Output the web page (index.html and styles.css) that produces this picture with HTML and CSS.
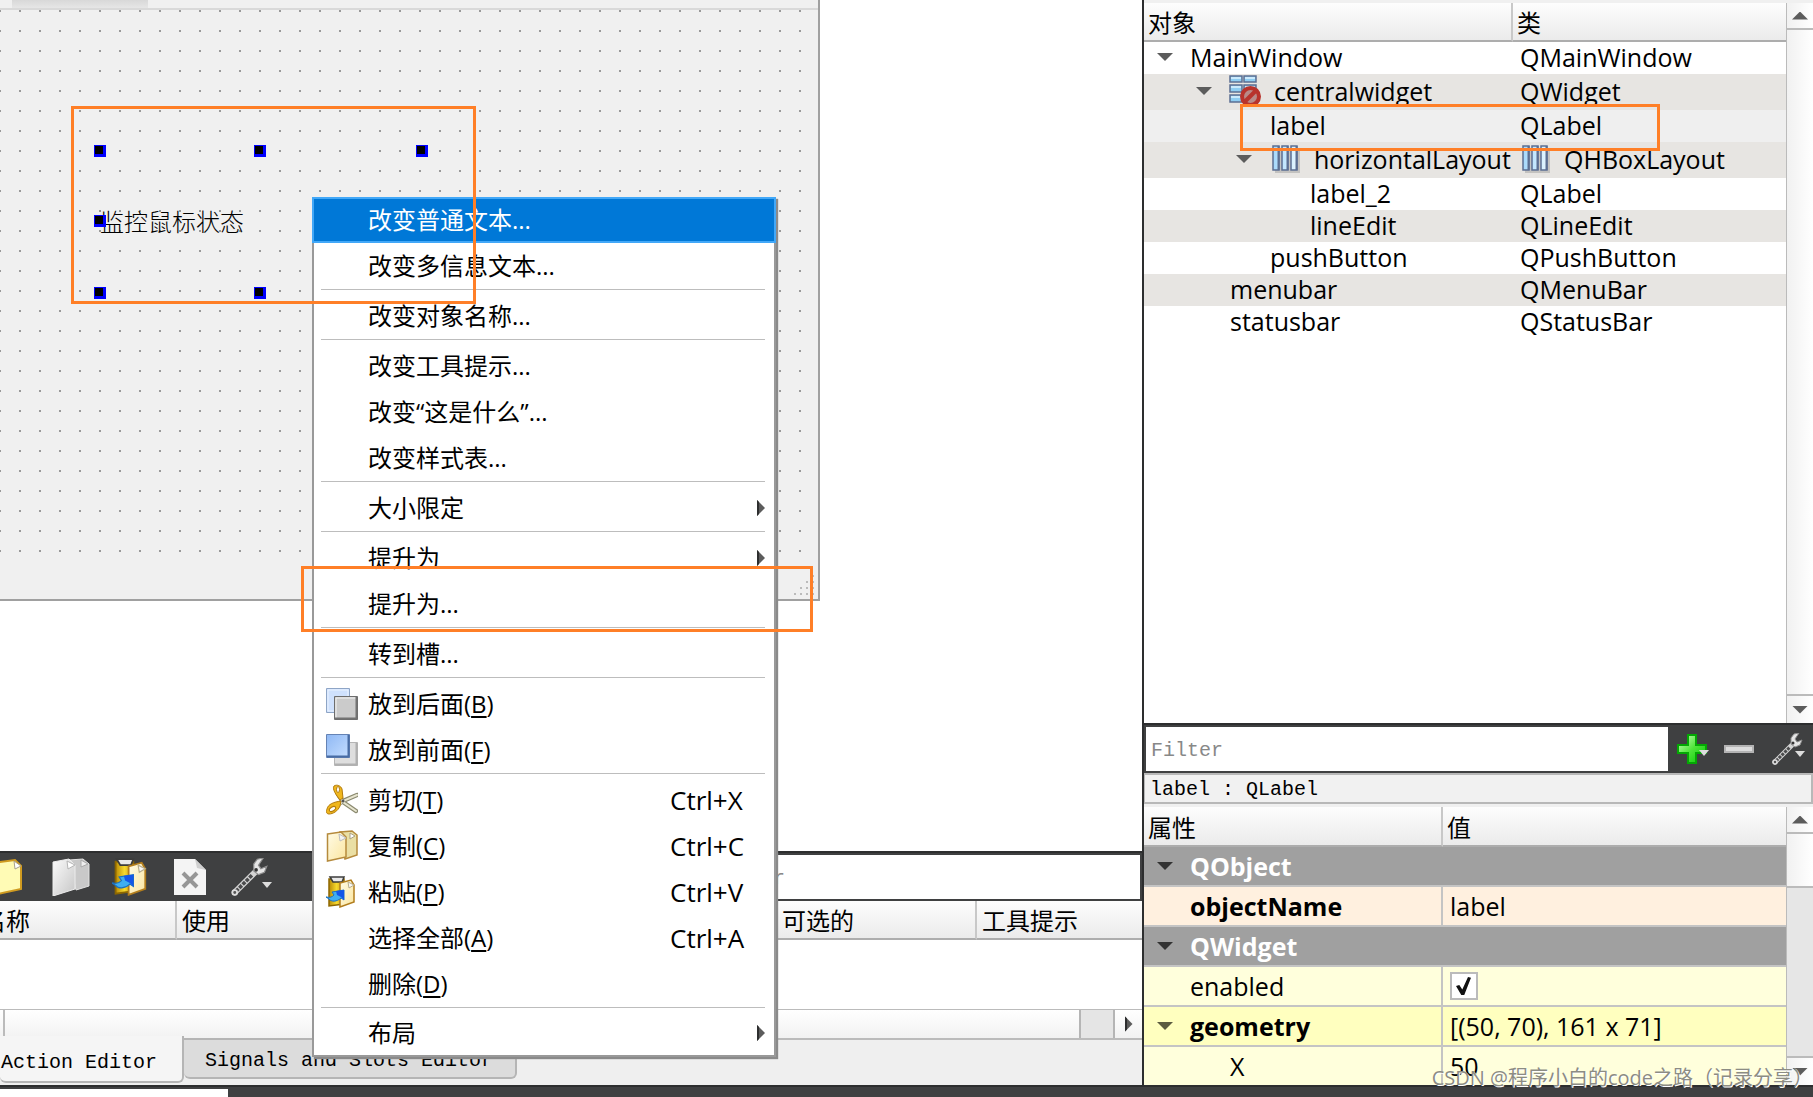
FILE: index.html
```html
<!DOCTYPE html>
<html lang="zh-CN">
<head>
<meta charset="utf-8">
<title>Designer</title>
<link rel="stylesheet" href="styles.css">
</head>
<body>
<svg class="defs" aria-hidden="true">
  <defs>
    <linearGradient id="cream" x1="0" y1="0" x2="1" y2="1"><stop offset="0" stop-color="#fffbe6"/><stop offset="1" stop-color="#fbe6a0"/></linearGradient>
    <linearGradient id="silver" x1="0" y1="0" x2="1" y2="1"><stop offset="0" stop-color="#fbfbfb"/><stop offset="1" stop-color="#c6c6c6"/></linearGradient>
    <linearGradient id="blue" x1="0" y1="0" x2="1" y2="1"><stop offset="0" stop-color="#8fb8f4"/><stop offset="1" stop-color="#c5deff"/></linearGradient>
    <linearGradient id="gold" x1="0" y1="0" x2="1" y2="0"><stop offset="0" stop-color="#b98a05"/><stop offset=".5" stop-color="#f6d92e"/><stop offset="1" stop-color="#c99710"/></linearGradient>
    <linearGradient id="sky" x1="0" y1="0" x2="1" y2="0"><stop offset="0" stop-color="#a5d8fb"/><stop offset="1" stop-color="#e4f6ff"/></linearGradient>
    <linearGradient id="green" x1="0" y1="0" x2="1" y2="1"><stop offset="0" stop-color="#d8ffc8"/><stop offset=".5" stop-color="#4fe53a"/><stop offset="1" stop-color="#00c800"/></linearGradient>
    <symbol id="i-copy" viewBox="0 0 32 32">
      <path d="M14 2l12-1 5 4v20l-12 4z" fill="#eadfa4" stroke="#b58a3c" stroke-width="1.5"/>
      <path d="M24 3v6l5-3z" fill="#fff" stroke="#a9a083"/>
      <path d="M1.500 4L15 2l5 5v20L1.500 31z" fill="url(#cream)" stroke="#b58a3c" stroke-width="1.5"/>
      <path d="M13 4l1 7 6-3z" fill="#f4f4f4" stroke="#bdbdbd"/>
    </symbol>
    <symbol id="i-copy-off" viewBox="0 0 38 38">
      <path d="M17 2l14-1 6 5v22l-13 4z" fill="#c9c9c9" stroke="#e2e2e2"/>
      <path d="M29 2v7l7-3z" fill="#eee" stroke="#aaa"/>
      <path d="M1 4l16-3 6 6v24L1 38z" fill="url(#silver)" stroke="#ededed"/>
      <path d="M15 3l1 8 7-4z" fill="#fff" stroke="#b5b5b5"/>
    </symbol>
    <symbol id="i-paste" viewBox="0 0 32 32">
      <path d="M3 3h15v25L3 30z" fill="url(#gold)" stroke="#8d6700" stroke-width="1.500"/>
      <path d="M4 1h14l-2 5H7z" fill="#e9e9e9" stroke="#3c3c3c" stroke-width="1.500"/>
      <path d="M14 7l11-3 3 5v17l-14 5z" fill="url(#cream)" stroke="#b27d1d" stroke-width="1.5"/>
      <path d="M22 6l1 6 5-3z" fill="#f8f8f8" stroke="#b7ad8d"/>
      <path d="M0 21c4 1 6 0 8-2l-2-3 12-2v10l-3-2c-4 4-10 4-12 1z" fill="#3faef2" stroke="#1b70c0"/>
      <path d="M10 15l8-1v10l-3-3-4-2z" fill="#1456e8"/>
    </symbol>
    <symbol id="i-page" viewBox="0 0 32 38">
      <path d="M2 5l22-3 6 6v23L2 37z" fill="#fffbb5" stroke="#d09b20" stroke-width="2"/>
      <path d="M23 3l1 8 6-3z" fill="#fff" stroke="#a8a08a"/>
    </symbol>
    <symbol id="i-delete" viewBox="0 0 32 36">
      <path d="M0 0h21l11 11v25H0z" fill="#f4f4f4"/>
      <path d="M21 0l2 9 9 2z" fill="#cfcfcf"/>
      <path d="M9 14l14 14M23 14L9 28" stroke="#969696" stroke-width="4"/>
    </symbol>
    <symbol id="i-wrench" viewBox="0 0 32 32">
      <path d="M4 29L22 11" stroke="#d4d4d4" stroke-width="5" stroke-linecap="round"/>
      <path d="M5 28L19 14" stroke="#4b4c4d" stroke-width="3" stroke-dasharray="3 1"/>
      <circle cx="4" cy="29" r="2" fill="#555" stroke="#ddd" stroke-width="1.500"/>
      <path d="M28 0l-5 1-3 4 0 6 4 3 5-2 2-5-5 2-2-3z" fill="#e6e6e6" stroke="#8e8e8e"/>
      <circle cx="22" cy="10" r="1.500" fill="#333"/>
    </symbol>
    <symbol id="i-cut" viewBox="0 0 32 32">
      <path d="M12 10l5 8 13 9M10 22l7-5 14-6" fill="none" stroke="#8b8a70" stroke-width="4.500" stroke-linecap="round"/>
      <path d="M12 10l5 8 13 9M13 21l4-4 14-6" fill="none" stroke="#e7e5cf" stroke-width="2" stroke-linecap="round"/>
      <path d="M8 2c3-2 7 0 8 3l1 9-3 2c-4-5-8-11-6-14z" fill="#f0b71d" stroke="#b37b0b"/>
      <path d="M1 25c1-5 7-7 14-8l-1 5c-2 5-7 8-11 8-3 0-3-3-2-5z" fill="#f0b71d" stroke="#b37b0b"/>
      <ellipse cx="12" cy="5.500" rx="1.500" ry="3" fill="#fff" stroke="#b37b0b"/>
      <ellipse cx="6.500" cy="25" rx="3.500" ry="2" transform="rotate(-30 6.500 25)" fill="#fff" stroke="#b37b0b"/>
      <circle cx="17" cy="17" r="1.500" fill="#555"/>
    </symbol>
    <symbol id="i-back" viewBox="0 0 32 32">
      <path d="M.500.500h23v24H.500z" fill="#cfe1fd" stroke="#8ea5c6"/><path d="M2 2h20v21H2z" fill="none" stroke="#eaf3ff"/>
      <path d="M8.500 8.500h23v23h-23z" fill="#cbcbcb" stroke="#6d6d6d"/><path d="M10 30V10h20" fill="none" stroke="#f3f3f3"/><path d="M9 30.500h21.500V9" fill="none" stroke="#737373" stroke-width="2"/>
    </symbol>
    <symbol id="i-front" viewBox="0 0 32 32">
      <path d="M8.500 8.500h23v23h-23z" fill="#dedede" stroke="#b5b5b5"/><path d="M9 30.500h21.500V9" fill="none" stroke="#b0b0b0" stroke-width="2"/>
      <path d="M.500.500h23v23H.500z" fill="url(#blue)" stroke="#6583b4"/><path d="M1 22.500h21.500V1" fill="none" stroke="#486ca4" stroke-width="2"/>
    </symbol>
    <symbol id="i-hbox" viewBox="0 0 28 28">
      <path d="M3 3h25v25H3z" fill="#c3c2c0"/>
      <g fill="url(#sky)" stroke="#5c6f92" stroke-width="1.500"><path d="M1 1h6v24H1zM10 1h6v24h-6zM19 1h6v24h-6z"/></g>
      <path d="M6.500 1v24M15.500 1v24M24.500 1v24" stroke="#5c6f92" stroke-width="2"/>
    </symbol>
    <symbol id="i-broken" viewBox="0 0 32 32">
      <g fill="#8ecdf2" stroke="#5c6f92" stroke-width="1.500"><path d="M1 1h12v6H1zM15 1h12v6H15zM1 10h12v7H1zM15 10h12v7H15zM1 20h12v7H1z"/></g>
      <path d="M2 3h10M16 3h10M2 12h10M16 12h10M2 22h10" stroke="#dff3ff" stroke-width="1.500"/>
      <circle cx="21.500" cy="21.500" r="8.500" fill="#b98a88" stroke="#b8332c" stroke-width="4"/>
      <path d="M15.500 27l12-12" stroke="#b8332c" stroke-width="4"/>
    </symbol>
    <symbol id="i-plus" viewBox="0 0 30 30"><path d="M11 1h8v10h10v8H19v10h-8V19H1v-8h10z" fill="url(#green)" stroke="#04a804" stroke-width="2"/></symbol>
    <symbol id="i-minus" viewBox="0 0 30 8"><path d="M1 1h28v6H1z" fill="#dcdcdc" stroke="#b3b3b3" stroke-width="2"/></symbol>
  </defs>
</svg>

<div class="app">
  <main class="left">
    <section class="mdi">
      <div class="form">
        <div class="form-tabs"><span class="form-tab"></span></div>
        <div class="dots"></div>
        <div class="form-foot">
          <svg class="grip" viewBox="0 0 20 20"><path d="M18 0h2v2h-2zM12 6h2v2h-2zM18 6h2v2h-2zM6 12h2v2H6zM12 12h2v2h-2zM18 12h2v2h-2zM0 18h2v2H0zM6 18h2v2H6zM12 18h2v2h-2zM18 18h2v2h-2z" fill="#bbb"/></svg>
        </div>
        <span class="form-label">监控鼠标状态</span>
        <i class="handle c1 r1"></i><i class="handle c2 r1"></i><i class="handle c3 r1"></i>
        <i class="handle c1 r2"></i>
        <i class="handle c1 r3"></i><i class="handle c2 r3"></i>
      </div>
    </section>

    <section class="actions">
      <div class="toolbar">
        <button class="tool tool-new" aria-label="新建"><svg><use href="#i-page"/></svg></button>
        <button class="tool tool-copy" aria-label="复制"><svg><use href="#i-copy-off"/></svg></button>
        <button class="tool tool-paste" aria-label="粘贴"><svg><use href="#i-paste"/></svg></button>
        <button class="tool tool-delete" aria-label="删除"><svg><use href="#i-delete"/></svg></button>
        <button class="tool tool-config" aria-label="配置"><svg><use href="#i-wrench"/></svg><i class="drop"></i></button>
        <input class="mono filter action-filter" type="text" placeholder="Filter" aria-label="动作过滤">
      </div>
      <div class="action-list">
        <table class="grid action-table">
          <thead><tr><th>名称</th><th>使用</th><th></th><th></th><th>可选的</th><th>工具提示</th></tr></thead>
        </table>
      </div>
      <div class="hscroll"><span class="hleft"></span><span class="hthumb"></span><span class="hright"><i class="tri right"></i></span></div>
      <div class="dock-tabs">
        <button class="mono dock-tab active">Action Editor</button>
        <button class="mono dock-tab">Signals and Slots Editor</button>
      </div>
    </section>
  </main>

  <aside class="right">
    <section class="inspector">
      <div class="pane">
        <table class="grid tree">
          <colgroup><col class="tree-name"><col></colgroup>
          <thead><tr><th>对象</th><th>类</th></tr></thead>
          <tbody>
            <tr><td><div class="cell d0"><i class="tri down"></i>MainWindow</div></td><td>QMainWindow</td></tr>
            <tr class="alt tall"><td><div class="cell d1"><i class="tri down"></i><svg class="ic32"><use href="#i-broken"/></svg>centralwidget</div></td><td>QWidget</td></tr>
            <tr class="sel"><td><div class="cell l2">label</div></td><td>QLabel</td></tr>
            <tr class="alt tall"><td><div class="cell d2"><i class="tri down"></i><svg class="ic28"><use href="#i-hbox"/></svg>horizontalLayout</div></td><td><div class="cell cls"><svg class="ic28"><use href="#i-hbox"/></svg>QHBoxLayout</div></td></tr>
            <tr><td><div class="cell l3">label_2</div></td><td>QLabel</td></tr>
            <tr class="alt"><td><div class="cell l3">lineEdit</div></td><td>QLineEdit</td></tr>
            <tr><td><div class="cell l2">pushButton</div></td><td>QPushButton</td></tr>
            <tr class="alt"><td><div class="cell l1">menubar</div></td><td>QMenuBar</td></tr>
            <tr><td><div class="cell l1">statusbar</div></td><td>QStatusBar</td></tr>
          </tbody>
        </table>
      </div>
      <div class="vscroll"><span class="vup"><i class="tri up"></i></span><span class="vtrack"></span><span class="vdown"><i class="tri down"></i></span></div>
    </section>

    <div class="prop-filter">
      <input class="mono filter" type="text" placeholder="Filter" aria-label="属性过滤">
      <div class="prop-tools">
        <button class="tool" aria-label="添加"><svg class="plus"><use href="#i-plus"/></svg><i class="drop"></i></button>
        <button class="tool" aria-label="移除"><svg class="minus"><use href="#i-minus"/></svg></button>
        <button class="tool" aria-label="配置"><svg class="ic32"><use href="#i-wrench"/></svg><i class="drop"></i></button>
      </div>
    </div>
    <div class="mono object-line">label : QLabel</div>

    <section class="props">
      <div class="pane">
        <table class="grid prop-table">
          <colgroup><col class="prop-name"><col></colgroup>
          <thead><tr><th>属性</th><th>值</th></tr></thead>
          <tbody>
            <tr class="group"><td colspan="2"><div class="cell d0"><i class="tri down dark"></i>QObject</div></td></tr>
            <tr class="peach"><td class="bold"><div class="cell l0">objectName</div></td><td>label</td></tr>
            <tr class="group"><td colspan="2"><div class="cell d0"><i class="tri down dark"></i>QWidget</div></td></tr>
            <tr class="pale"><td><label class="cell l0" for="enabled">enabled</label></td><td><input class="check" type="checkbox" id="enabled" checked></td></tr>
            <tr class="yellow"><td class="bold"><div class="cell d0"><i class="tri down olive"></i>geometry</div></td><td>[(50, 70), 161 x 71]</td></tr>
            <tr class="pale"><td><div class="cell l1">X</div></td><td>50</td></tr>
          </tbody>
        </table>
      </div>
      <div class="vscroll"><span class="vup"><i class="tri up"></i></span><span class="vtrack short"></span><span class="vthumb"></span><span class="vdown"><i class="tri down"></i></span></div>
    </section>
  </aside>
</div>
<footer class="bottom"><span class="bottom-white"></span></footer>

<div class="menu" role="menu">
  <button class="item on" role="menuitem">改变普通文本...</button>
  <button class="item" role="menuitem">改变多信息文本...</button>
  <hr>
  <button class="item" role="menuitem">改变对象名称...</button>
  <hr>
  <button class="item" role="menuitem">改变工具提示...</button>
  <button class="item" role="menuitem">改变“这是什么”...</button>
  <button class="item" role="menuitem">改变样式表...</button>
  <hr>
  <button class="item" role="menuitem">大小限定<i class="tri right"></i></button>
  <hr>
  <button class="item" role="menuitem">提升为<i class="tri right"></i></button>
  <button class="item" role="menuitem">提升为...</button>
  <hr>
  <button class="item" role="menuitem">转到槽...</button>
  <hr>
  <button class="item pic" role="menuitem"><svg class="ic32"><use href="#i-back"/></svg><span>放到后面(<u>B</u>)</span></button>
  <button class="item pic" role="menuitem"><svg class="ic32"><use href="#i-front"/></svg><span>放到前面(<u>F</u>)</span></button>
  <hr>
  <button class="item pic" role="menuitem"><svg class="ic32"><use href="#i-cut"/></svg><span>剪切(<u>T</u>)</span><kbd>Ctrl+X</kbd></button>
  <button class="item pic" role="menuitem"><svg class="ic32"><use href="#i-copy"/></svg><span>复制(<u>C</u>)</span><kbd>Ctrl+C</kbd></button>
  <button class="item pic" role="menuitem"><svg class="ic32"><use href="#i-paste"/></svg><span>粘贴(<u>P</u>)</span><kbd>Ctrl+V</kbd></button>
  <button class="item" role="menuitem"><span>选择全部(<u>A</u>)</span><kbd>Ctrl+A</kbd></button>
  <button class="item" role="menuitem"><span>删除(<u>D</u>)</span></button>
  <hr>
  <button class="item" role="menuitem">布局<i class="tri right"></i></button>
</div>

<div class="mark mark-label"></div>
<div class="mark mark-promote"></div>
<div class="mark mark-tree"></div>
<div class="watermark">CSDN @程序小白的code之路（记录分享）</div>
</body>
</html>
```

FILE: styles.css
```css
* { box-sizing: border-box; }
body {
  margin: 0;
  min-height: 100vh;
  display: flex;
  flex-direction: column;
  position: relative;
  overflow: hidden;
  background: #fff;
  color: #000;
  font: 24px/32px "Open Sans", "Noto Sans CJK SC", sans-serif;
}
button, input { font: inherit; color: inherit; border: 0; margin: 0; padding: 0; background: none; border-radius: 0; }
.defs { position: absolute; width: 0; height: 0; }
.mono { font: 20px/28px "Liberation Mono", "Noto Sans CJK SC", monospace; }
.ic32 { width: 32px; height: 32px; flex: none; }
.ic28 { width: 28px; height: 28px; flex: none; }

.app { flex: 1; display: flex; min-height: 0; }
.left { flex: 1; min-width: 0; display: flex; flex-direction: column; }
.right { width: 671px; flex: none; display: flex; flex-direction: column; border-left: 2px solid #2d2e2f; background: #f0f0f0; padding-top: 3px; }
.bottom { height: 12px; background: #3f4041; border-top: 2px solid #2d2e2f; padding-top: 2px; display: flex; }
.bottom-white { width: 228px; background: #fff; }

/* triangles */
.tri { flex: none; width: 16px; height: 8px; background: #5c5c5c; }
.tri.down { clip-path: polygon(0 0, 100% 0, 50% 100%); }
.tri.up { clip-path: polygon(0 100%, 100% 100%, 50% 0); }
.tri.right { width: 8px; height: 16px; clip-path: polygon(0 0, 100% 50%, 0 100%); }
.tri.dark { background: #333; }
.tri.olive { background: #5c5c40; }
.drop { width: 10px; height: 6px; background: #ddd; clip-path: polygon(0 0, 100% 0, 50% 100%); }

/* form canvas */
.mdi { flex: 1; position: relative; background: #fff; overflow: hidden; }
.form { position: absolute; left: 0; top: 0; width: 820px; height: 601px; background: #f0f0f0; border: solid #a0a0a0; border-width: 0 2px 2px 0; display: flex; flex-direction: column; }
.form-tabs { height: 10px; border-bottom: 2px solid #d9d9d9; display: flex; padding-left: 12px; }
.form-tab { width: 136px; background: linear-gradient(#d8d8d8, #e6e6e6); }
.dots { flex: 1; background: conic-gradient(from 270deg at 2px 2px, #999 90deg, transparent 0) -1px 0 / 20px 20px; }
.form-foot { height: 36px; display: flex; justify-content: flex-end; align-items: flex-end; padding: 0 4px 4px 0; }
.grip { width: 20px; height: 20px; }
.form-label { position: absolute; left: 100px; top: 206px; font-weight: 300; }
.handle { position: absolute; width: 12px; height: 12px; background: #000; border: 2px solid #00f; border-left-width: 1px; border-top-width: 1px; box-shadow: inset -1px -1px 0 #00f; }
.c1 { left: 94px; }
.c2 { left: 254px; }
.c3 { left: 416px; }
.r1 { top: 145px; }
.r2 { top: 215px; }
.r3 { top: 287px; }

/* action editor */
.toolbar { height: 50px; background: #3f4041; border-top: 2px solid #2d2e2f; display: flex; align-items: center; padding-right: 2px; }
.tool { display: flex; align-items: center; position: relative; }
.toolbar svg { display: block; width: 38px; height: 38px; }
.tool-new { margin-left: -9px; }
.toolbar .tool-new svg { width: 32px; }
.tool-copy { margin-left: 29px; }
.tool-paste { margin-left: 22px; }
.tool-delete { margin-left: 24px; }
.toolbar .tool-delete svg { width: 32px; }
.tool-config { margin-left: 24px; }
.tool .drop { position: absolute; right: -2px; bottom: 8px; }
.tool-config .drop { right: -4px; }
.filter { flex: 1; min-width: 0; height: 44px; background: #fff; padding: 2px 0 0 5px; }
.filter::placeholder { color: #888; opacity: 1; }
.action-filter { flex: none; width: 432px; margin-left: auto; }
.action-list { height: 108px; background: #fff; overflow: hidden; }
.grid { border-collapse: separate; border-spacing: 0; table-layout: fixed; width: 100%; }
.grid th { height: 39px; padding: 3px 0 0 4px; text-align: left; font-weight: 400; line-height: 32px; background: linear-gradient(#fdfdfd, #ebebeb); border-bottom: 2px solid #adadad; border-right: 2px solid #c8c8c8; }
.grid th:last-child { border-right: 0; }
.action-table { margin-left: -23px; width: calc(100% + 23px); }
.action-table th { width: 200px; padding-left: 5px; }
.action-table th:last-child { width: auto; }
.hscroll { height: 31px; display: flex; border-top: 1px solid #bbb; border-bottom: 2px solid #bbb; background: linear-gradient(#fff, #f2f2f2); }
.hleft { width: 5px; border-right: 2px solid #bbb; }
.hthumb { width: 36px; margin-left: auto; background: #e5e5e5; border: solid #b5b5b5; border-width: 0 2px; }
.hright { width: 27px; display: flex; align-items: center; justify-content: center; }
.dock-tabs { height: 45px; background: #efefef; display: flex; align-items: flex-start; }
.dock-tab { height: 41px; margin-top: -2px; padding: 4px 22px 0 21px; background: #dcdcdc; border: 2px solid #b5b5b5; border-left: 0; border-radius: 0 0 6px 6px; }
.dock-tab.active { height: 47px; margin-top: -4px; padding: 8px 25px 0 1px; background: #f5f5f5; border-top: 0; }

/* scroll bars */
.vscroll { width: 27px; flex: none; display: flex; flex-direction: column; border-left: 1px solid #bbb; background: linear-gradient(90deg, #f1f1f1, #fff); }
.vup, .vdown { flex: none; display: flex; justify-content: center; align-items: center; height: 27px; }
.vup { border-bottom: 2px solid #bbb; }
.vdown { height: 29px; border-top: 2px solid #bbb; }
.vtrack { flex: 1; }
.vtrack.short { flex: none; height: 52px; }
.vthumb { flex: 1; background: #e6e6e6; border-top: 2px solid #bbb; }

/* object inspector */
.inspector { flex: 1; min-height: 0; display: flex; }
.pane { flex: 1; min-width: 0; background: #fff; overflow: hidden; }
.tree-name { width: 369px; }
.tree td { height: 32px; padding: 0 0 0 7px; line-height: 30px; white-space: nowrap; vertical-align: top; }
.tree td:first-child { padding: 0; }
.tree .tall td { height: 36px; line-height: 34px; }
.alt { background: #e7e5e2; }
.sel { background: #efefef; }
.cell { display: flex; align-items: center; }
.d0 { padding-left: 13px; gap: 17px; }
.d1 { padding-left: 52px; gap: 17px; }
.d1 .ic32 { margin-right: -4px; }
.d2 { padding-left: 92px; gap: 20px; }
.d2 .ic28 { margin-right: -6px; }
.cls { gap: 14px; padding-left: 2px; }
.l0 { padding-left: 46px; }
.l1 { padding-left: 86px; }
.l2 { padding-left: 126px; }
.l3 { padding-left: 166px; }
.tree tbody, .prop-table tbody { font-size: 25px; }

/* property editor */
.prop-filter { height: 50px; flex: none; background: #3f4041; border-top: 2px solid #2d2e2f; display: flex; align-items: center; padding-left: 2px; }
.prop-tools { width: 145px; display: flex; align-items: center; padding-left: 9px; gap: 17px; }
.plus { width: 30px; height: 30px; }
.minus { width: 30px; height: 8px; }
.object-line { height: 31px; flex: none; border: 2px solid #b8b8b8; border-left-width: 1px; background: #f1f1f1; padding: 2px 0 0 5px; margin-bottom: 3px; line-height: 26px; }
.props { height: 278px; flex: none; display: flex; overflow: hidden; }
.prop-name { width: 299px; }
.prop-table th { height: 40px; }
.prop-table td { height: 40px; padding: 0 0 0 7px; line-height: 32px; border-bottom: 2px solid #c4c4c4; border-right: 2px solid #c4c4c4; white-space: nowrap; }
.prop-table td:first-child { padding-left: 0; }
.prop-table td:last-child { border-right: 0; }
.group { background: #a0a0a0; color: #fff; }
.group, .bold { font-weight: 700; }
.peach { background: #fff0df; }
.pale { background: #ffffdc; }
.yellow { background: #ffffbf; }
.check { appearance: none; display: block; position: relative; width: 28px; height: 28px; border: 2px solid #bbb; background: #fff; }
.check:checked::after { content: ""; position: absolute; inset: 3px 5px 3px 4px; background: #111; clip-path: polygon(0 50%, 22% 45%, 42% 70%, 80% 0, 100% 4%, 55% 100%, 35% 100%); }

/* context menu */
.menu { position: absolute; left: 312px; top: 197px; width: 464px; background: #fff; border: 2px solid #999; border-top: 0; box-shadow: 2px 2px 1px #8a8a8a; display: flex; flex-direction: column; }
.item { height: 46px; display: flex; align-items: center; padding: 0 9px 0 54px; text-align: left; white-space: nowrap; }
.item.on { margin: 0 -2px; background: #0078d7; border: 2px solid #42a8f8; color: #fff; }
.item.pic { padding-left: 12px; gap: 10px; }
.item:last-child { height: 44px; }
.item .tri, .item kbd { margin-left: auto; }
.item kbd { font: inherit; font-size: 26px; width: 95px; }
.item u { text-underline-offset: 3px; text-decoration-thickness: 2px; }
.menu hr { width: auto; height: 4px; margin: 0 9px 0 7px; border: 0; border-top: 1px solid #bdbdbd; }

/* highlight frames */
.mark { position: absolute; border: 3px solid #ff7f27; pointer-events: none; }
.mark-label { left: 71px; top: 106px; width: 405px; height: 198px; }
.mark-promote { left: 301px; top: 566px; width: 512px; height: 66px; }
.mark-tree { left: 1240px; top: 104px; width: 420px; height: 47px; }
.watermark { position: absolute; right: 0; bottom: 3px; font-size: 20px; line-height: 32px; color: #8c8c84; text-shadow: 1px 1px 0 #fff; white-space: nowrap; }
```
